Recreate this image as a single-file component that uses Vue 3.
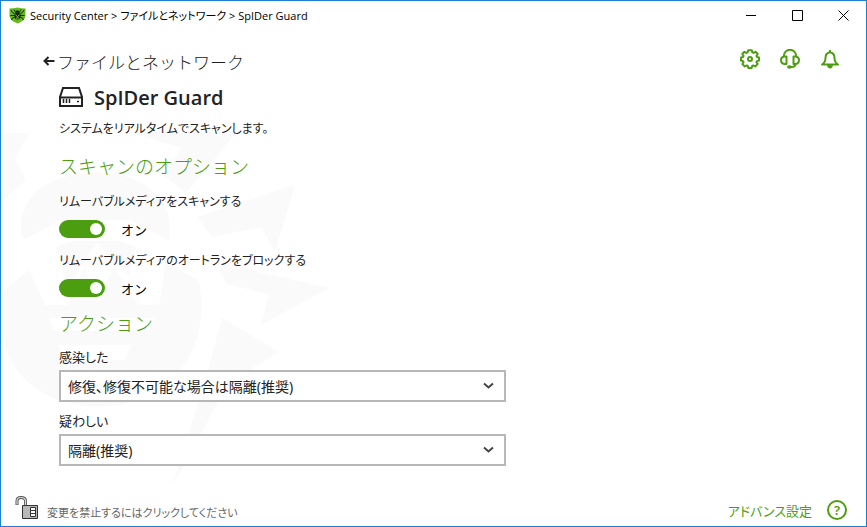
<script setup>
import { ref } from 'vue'

const toggles = ref([
  { id: 'scan-removable', label: 'リムーバブルメディアをスキャンする', on: true },
  { id: 'block-autorun', label: 'リムーバブルメディアのオートランをブロックする', on: true },
])

const actions = ref([
  {
    id: 'infected',
    label: '感染した',
    value: '修復、修復不可能な場合は隔離(推奨)',
    options: ['修復、修復不可能な場合は隔離(推奨)', '隔離(推奨)'],
  },
  {
    id: 'suspicious',
    label: '疑わしい',
    value: '隔離(推奨)',
    options: ['隔離(推奨)'],
  },
])
</script>

<template>
  <div class="window">
    <svg class="watermark" width="340" height="400" viewBox="0 100 340 400" aria-hidden="true">
      <g fill="#fafafa">
        <path d="M0 133H28L14 158L25 180L0 202Z" />
        <path d="M127 132H236L185 193L162 175L181 148Z" />
        <path d="M294 185L196 217L211 237L260 227L274 252Z" />
        <path d="M217 262L257 272L328 288L260 325L268 294L225 284Z" />
        <path d="M221 318L278 352L247 371L217 402L172 485L207 370Z" />
        <path d="M22 240C12 200 45 173 95 173C145 173 175 200 168 241L130 220H60Z" />
        <path d="M55 247L72 241H118L135 247L128 275L113 262L96 243L82 262L67 291Z" />
        <path d="M0 292L28 270L44 305H66L84 266L96 305L113 266L137 305H158L165 262L198 281C207 330 190 368 160 387C122 416 60 412 26 381C12 368 4 350 0 334Z" />
      </g>
      <path d="M48 318H153L148 331H52ZM57 345H130L124 360H63Z" fill="#fff" />
    </svg>

    <header class="titlebar">
      <svg class="logo" width="17" height="17" viewBox="0 0 17 17" aria-hidden="true">
        <path d="M.5 1.500Q5 1.500 8.500 .5Q12 1.500 16.500 1.500V9Q16 14 8.500 16.500Q1 14 .5 9Z" fill="#62bd19" />
        <path d="M6 7L3.500 5.500L2 3M6 8.500H1.500M6 10L3.500 11L2.500 13M11 7L13.500 5.500L15 3M11 8.500H15.500M11 10L13.500 11L14.500 13M7 6L5 2.500M10 6L12 2.500" fill="none" stroke="#172b0b" stroke-width="1" />
        <ellipse cx="8.500" cy="9" rx="3" ry="3.500" fill="#172b0b" />
        <circle cx="8.500" cy="5" r="1.800" fill="#172b0b" />
        <path d="M6.500 8L8.500 9.500L10.500 8M7 11H10" fill="none" stroke="#a8e070" stroke-width=".8" />
      </svg>
      <span class="crumbs">Security Center &gt; <span class="jp">ファイルとネットワーク</span> &gt; SpIDer Guard</span>
      <div class="winbtns">
        <button type="button" aria-label="最小化">
          <svg width="11" height="11" viewBox="0 0 11 11"><path d="M0 5.500H10" stroke="#000" /></svg>
        </button>
        <button type="button" aria-label="最大化">
          <svg width="11" height="11" viewBox="0 0 11 11"><path d="M.5 .5H10.500V10.500H.5Z" fill="none" stroke="#000" /></svg>
        </button>
        <button type="button" aria-label="閉じる">
          <svg width="11" height="11" viewBox="0 0 11 11"><path d="M.5 .5L10.500 10.500M10.500 .5L.5 10.500" stroke="#000" /></svg>
        </button>
      </div>
    </header>

    <div class="body">
      <nav class="tools">
        <button type="button" aria-label="設定">
          <svg width="20" height="20" viewBox="0 0 20 20" class="line">
            <path d="M8.200 1.200H11.800L12.400 3.400L13.600 3.900L15.600 2.800L17.700 5L16.500 6.900L16.900 8L19 8.400V11.600L16.900 12.100L16.500 13.200L17.600 15.100L15.200 17.500L13.300 16.400L12.200 16.900L11.700 18.900H8.300L7.800 16.900L6.700 16.400L4.800 17.500L2.400 15.100L3.500 13.200L3.100 12.100L1 11.600V8.400L3.100 8L3.500 6.900L2.300 5L4.400 2.800L6.400 3.900L7.600 3.400Z" />
            <circle cx="10" cy="10" r="2" />
          </svg>
        </button>
        <button type="button" aria-label="サポート">
          <svg width="20" height="20" viewBox="0 0 20 20" class="line">
            <path d="M3.800 7.500V7A6.200 6.200 0 0 1 16.200 7V7.500" />
            <path d="M6.500 7.500H4.500Q1 8 1 11Q1 14.500 4.500 15H6.500ZM13.500 7.500H15.500Q19 8 19 11Q19 14.500 15.500 15H13.500Z" />
            <path d="M15.500 15Q15.500 18 11 18" />
            <ellipse cx="9.500" cy="18" rx="2.500" ry="1.800" fill="#4c9e10" stroke="none" />
          </svg>
        </button>
        <button type="button" aria-label="通知">
          <svg width="20" height="20" viewBox="0 0 20 20" class="line">
            <path d="M2 15.500Q5.500 13.500 5.500 9Q5.500 3.500 10 3.500Q14.500 3.500 14.500 9Q14.500 13.500 18 15.500Z" />
            <path d="M10 1V3.500" />
            <path d="M7 16H13Q12.500 19.500 10 19.500Q7.500 19.500 7 16Z" fill="#4c9e10" stroke="none" />
          </svg>
        </button>
      </nav>

      <main class="content">
        <a class="back" href="#">
          <svg width="12" height="10" viewBox="0 0 12 10" aria-hidden="true"><path d="M11.500 5H2M5.500 1L1.500 5L5.500 9" fill="none" stroke="#222" stroke-width="2" /></svg>
          <span>ファイルとネットワーク</span>
        </a>
        <h1>
          <svg width="24" height="20" viewBox="0 0 24 20" aria-hidden="true">
            <path d="M4 1H20L23 10V19H1V10ZM1 10.500H23" fill="none" stroke="#222" stroke-width="2" />
            <path d="M4.500 12V16M7.500 12V16M10.500 12V16M18 14.500H20" stroke="#222" stroke-width="1.500" />
          </svg>
          <span>SpIDer Guard</span>
        </h1>
        <p class="desc">システムをリアルタイムでスキャンします。</p>

        <section>
          <h2>スキャンのオプション</h2>
          <div v-for="t in toggles" :key="t.id" class="option">
            <label class="caption" :for="t.id">{{ t.label }}</label>
            <div class="switch-row">
              <input :id="t.id" v-model="t.on" type="checkbox" role="switch" class="switch" />
              <span class="state">{{ t.on ? 'オン' : 'オフ' }}</span>
            </div>
          </div>
        </section>

        <section>
          <h2>アクション</h2>
          <div v-for="a in actions" :key="a.id" class="field">
            <label class="caption" :for="a.id">{{ a.label }}</label>
            <div class="select-box">
              <select :id="a.id" v-model="a.value">
                <option v-for="o in a.options" :key="o">{{ o }}</option>
              </select>
              <svg width="11" height="8" viewBox="0 0 11 8" aria-hidden="true"><path d="M1 1.500L5.500 5.500L10 1.500" fill="none" stroke="#444" stroke-width="2" /></svg>
            </div>
          </div>
        </section>
      </main>
    </div>

    <footer class="footer">
      <button type="button" class="lock">
        <svg width="24" height="24" viewBox="0 0 24 24" aria-hidden="true">
          <path d="M2 9V5Q2 1.500 6 1.500Q10.500 1.500 10.500 5V9" fill="none" stroke="#555" stroke-width="3" />
          <path d="M2 8.500V5Q2 1.500 6 1.500Q10.500 1.500 10.500 5V9" fill="none" stroke="#ddd" stroke-width="1.200" />
          <path d="M7.500 9.500H22.500V22.500H7.500Z" fill="#b8b8b8" stroke="#333" />
          <path d="M15.500 11.500H20.500V20.500H15.500ZM15.500 14.500H20.500M15.500 17.500H20.500" fill="#fff" stroke="#333" />
        </svg>
        <span>変更を禁止するにはクリックしてください</span>
      </button>
      <div class="links">
        <a href="#">アドバンス設定</a>
        <button type="button" class="help" aria-label="ヘルプ">?</button>
      </div>
    </footer>
  </div>
</template>

<style>
body {
  background: #fff;
}
</style>

<style scoped>
.window {
  position: relative;
  box-sizing: border-box;
  min-height: 100vh;
  display: flex;
  flex-direction: column;
  border: 1px solid #1a80d0;
  background: #fff;
  color: #222;
  font-family: "Noto Sans", "Noto Sans CJK JP", sans-serif;
  font-size: 13px;
  overflow: hidden;
}
button {
  display: flex;
  align-items: center;
  padding: 0;
  border: 0;
  background: none;
  color: inherit;
  font: inherit;
  cursor: pointer;
}
a {
  color: inherit;
  text-decoration: none;
}
svg {
  display: block;
  flex: none;
}
h1, h2, p {
  margin: 0;
}
.watermark {
  position: absolute;
  left: 0;
  top: 99px;
}
.titlebar {
  display: flex;
  align-items: center;
  height: 29px;
  padding-left: 8px;
  gap: 4px;
  color: #000;
  font-size: 11px;
}
.crumbs {
  flex: 1;
  padding-bottom: 2px;
  white-space: nowrap;
  font-family: "Open Sans", "Noto Sans CJK JP", sans-serif;
}
.jp, .desc, .caption, .select-box select, .footer {
  font-feature-settings: "palt";
}
.winbtns {
  display: flex;
}
.winbtns button {
  width: 46px;
  height: 29px;
  justify-content: center;
}
.body {
  position: relative;
  flex: 1;
  display: flex;
  flex-direction: row-reverse;
  justify-content: space-between;
}
.tools {
  display: flex;
  gap: 20px;
  padding: 19px 26px 0 0;
  align-items: flex-start;
}
.line {
  fill: none;
  stroke: #4c9e10;
  stroke-width: 2;
  stroke-linejoin: round;
}
.content {
  flex: 0 1 463px;
  padding: 19px 0 6px 42px;
}
.content > :not(.back) {
  margin-left: 16px;
}
.back {
  display: flex;
  align-items: center;
  gap: 2px;
  height: 24px;
  font-size: 17px;
  font-weight: 300;
}
h1 {
  display: flex;
  align-items: center;
  gap: 11px;
  height: 48px;
  font-family: "Open Sans", sans-serif;
  font-size: 20px;
  font-weight: 600;
}
.desc {
  height: 16px;
  line-height: 16px;
  font-size: 12px;
}
h2 {
  height: 28px;
  line-height: 28px;
  color: #4c9e10;
  font-size: 19px;
  font-weight: 300;
}
section {
  padding-top: 16px;
}
section + section {
  padding-top: 11px;
}
.caption {
  display: block;
  height: 20px;
  line-height: 20px;
}
.option {
  padding-top: 11px;
}
.option .caption {
  font-size: 12px;
}
.switch-row {
  display: flex;
  align-items: center;
  gap: 16px;
  height: 28px;
  padding-top: 6px;
  box-sizing: border-box;
}
.switch {
  appearance: none;
  display: flex;
  align-items: center;
  justify-content: flex-start;
  box-sizing: border-box;
  width: 46px;
  height: 18px;
  margin: 0;
  padding: 0 3px;
  border-radius: 9px;
  background: #999;
}
.switch:checked {
  justify-content: flex-end;
  background: #4c9e10;
}
.switch::before {
  content: "";
  width: 12px;
  height: 12px;
  border-radius: 50%;
  background: #fff;
}
.state {
  color: #000;
}
.field {
  padding-top: 9px;
}
.select-box {
  display: flex;
  align-items: center;
  margin-top: 3px;
}
.select-box select {
  appearance: none;
  flex: 1;
  min-width: 0;
  height: 32px;
  margin-right: -23px;
  padding: 0 24px 0 7px;
  border: 2px solid #b7b7b7;
  border-radius: 0;
  background: #fff;
  color: #222;
  font-family: inherit;
  font-size: 14px;
}
.select-box svg {
  position: relative;
  margin-right: 12px;
  pointer-events: none;
}
.footer {
  position: relative;
  display: flex;
  justify-content: space-between;
  align-items: center;
  height: 32px;
  padding: 0 19px 0 14px;
}
.lock {
  gap: 8px;
  color: #666;
  font-size: 11px;
  align-items: flex-end;
  padding-bottom: 5px;
}
.links {
  display: flex;
  align-items: center;
  gap: 15px;
  color: #4c9e10;
}
.help {
  box-sizing: border-box;
  width: 20px;
  height: 20px;
  justify-content: center;
  border: 2px solid #4c9e10;
  border-radius: 50%;
  font-size: 13px;
  font-weight: 600;
}
</style>
